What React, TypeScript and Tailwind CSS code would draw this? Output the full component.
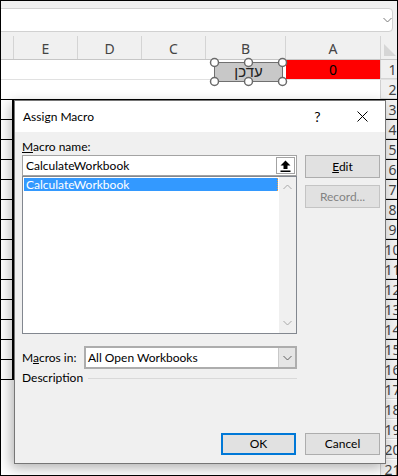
import React from 'react';

const cols = [
  { cls: 'w-[13px]', label: '' },
  { cls: 'w-[64px]', label: 'E' },
  { cls: 'w-[64px]', label: 'D' },
  { cls: 'w-[64px]', label: 'C' },
  { cls: 'w-[80px]', label: 'B' },
  { cls: 'w-[95px]', label: 'A' },
];

function Chevron({ up = false, color = '#606060' }: { up?: boolean; color?: string }) {
  return (
    <svg width="9" height="6" viewBox="0 0 9 6">
      <path d={up ? 'M0.5 5 L4.5 1 L8.5 5' : 'M0.5 1 L4.5 5 L8.5 1'} fill="none" stroke={color} strokeWidth="1" />
    </svg>
  );
}

export default function App() {
  const rows = Array.from({ length: 21 }, (_, i) => i + 1);
  return (
    <div className="relative w-[398px] h-[476px] border border-black overflow-hidden bg-white font-['Noto_Sans',sans-serif]">
      {/* top band */}
      <div className="h-[7px] bg-[#f0f0f0]" />
      {/* formula bar */}
      <div className="h-[24px] bg-[#f0f0f0] flex">
        <div className="-ml-[4px] w-[396px] h-full bg-white border border-[#d1d1d1] rounded-[4px] flex items-center justify-end">
          <Chevron color="#7a7a7a" />
        </div>
      </div>
      <div className="h-[4px] bg-[#f0f0f0]" />
      {/* column header */}
      <div className="h-[24px] flex bg-[#f0f0f0] border-b border-[#c6c6c6] w-[420px]">
        {cols.map((c, i) => (
          <div
            key={i}
            className={`${c.cls} shrink-0 h-full border-r border-[#d4d4d4] flex items-center justify-center pt-[2px] text-[14px] text-[#444]`}
          >
            {c.label}
          </div>
        ))}
        <div className="w-[23px] shrink-0 h-full relative">
          <svg className="absolute left-[3px] top-[8px]" width="12" height="12" viewBox="0 0 12 12">
            <path d="M0 0 L0 12 L12 12 Z" fill="#d6d6d6" />
          </svg>
        </div>
      </div>
      {/* rows */}
      {rows.map((r) => {
        const boxed = r >= 3 && r <= 16;
        const rowBorder = r === 1 ? 'border-[#e1e1e1]' : r >= 2 && r <= 16 ? 'border-black' : 'border-transparent';
        return (
          <div key={r} className={`h-[20px] flex w-[420px] border-b ${rowBorder}`}>
            {cols.map((c, i) => (
              <div
                key={i}
                className={`${c.cls} shrink-0 h-full ${
                  boxed ? (i === 0 ? 'border-r-2 border-black' : 'border-r border-black') : i === 5 ? 'border-r border-[#d0d0d0]' : ''
                } ${r === 1 && i === 5 ? 'bg-[#ff0000] flex items-center justify-center text-[14px] text-black' : ''}`}
              >
                {r === 1 && i === 5 ? '0' : ''}
              </div>
            ))}
            <div className="w-[23px] shrink-0 h-full bg-[#f0f0f0] flex items-center justify-center text-[14px] text-[#444] -mb-px border-b border-[#d4d4d4]">
              {r}
            </div>
          </div>
        );
      })}

      {/* shape button with handles */}
      <div className="absolute left-[208px] top-[56px] w-[80px] h-[31px]">
        <svg className="absolute inset-0" width="80" height="31" viewBox="0 0 80 31">
          <rect x="5.5" y="5.5" width="68" height="19" fill="#c8c8c8" stroke="#707070" strokeWidth="1" />
          {[5.5, 39.5, 73.5].map((x) =>
            [5.5, 24.5].map((y) => (
              <circle key={`${x}-${y}`} cx={x} cy={y} r="4" fill="#ffffff" stroke="#6a6a6a" strokeWidth="1.5" />
            ))
          )}
        </svg>
        <div className="absolute left-[5px] top-[6px] w-[69px] h-[19px] flex items-center justify-center text-[15px] text-[#222] font-['Liberation_Sans','DejaVu_Sans',sans-serif]" dir="rtl">
          עדכן
        </div>
      </div>

      {/* dialog */}
      <div className="absolute left-[13px] top-[99px] w-[372px] h-[364px] border border-[#767676] bg-[#f0f0f0] shadow-[-3px_4px_12px_rgba(0,0,0,0.3)] flex flex-col text-[12px] leading-[16px] text-black font-['Lato',sans-serif]">
        <div className="h-[31px] bg-white flex items-center shrink-0">
          <div className="pl-[8px]">Assign Macro</div>
          <div className="ml-auto flex h-full">
            <div className="w-[43px] h-full flex items-center justify-center text-[14px]">?</div>
            <div className="w-[46px] h-full flex items-center justify-center">
              <svg width="11" height="11" viewBox="0 0 11 11">
                <path d="M0.5 0.5 L10.5 10.5 M10.5 0.5 L0.5 10.5" stroke="#000" strokeWidth="1" />
              </svg>
            </div>
          </div>
        </div>
        <div className="flex-1 flex flex-col pl-[7px] pr-[5px]">
          <div className="mt-[7px] h-[16px]">
            <span className="underline">M</span>acro name:
          </div>
          <div className="flex gap-[8px]">
            <div className="w-[275px] flex flex-col">
              <div className="h-[21px] bg-white border border-[#a3a3a3] flex items-center">
                <div className="flex-1 pl-[3px]">CalculateWorkbook</div>
                <div className="w-[19px] h-[17px] mr-[1px] bg-white border border-[#a3a3a3] flex items-center justify-center">
                  <svg width="11" height="12" viewBox="0 0 11 12">
                    <path d="M5.5 0.5 L10.5 5.5 L7.5 5.5 L7.5 9 L3.5 9 L3.5 5.5 L0.5 5.5 Z" fill="#000" />
                    <rect x="0.5" y="10.5" width="10" height="1.5" fill="#000" />
                  </svg>
                </div>
              </div>
              <div className="h-[158px] bg-white border border-[#82878f] flex">
                <div className="flex-1 p-[1px]">
                  <div className="h-[13px] leading-[13px] bg-[#3399ff] text-white pl-[2px] border-r border-dotted border-[#e0a050]">
                    CalculateWorkbook
                  </div>
                </div>
                <div className="w-[17px] bg-[#f0f0f0] flex flex-col items-center justify-between py-[7px]">
                  <Chevron up color="#a8a8a8" />
                  <Chevron color="#a8a8a8" />
                </div>
              </div>
            </div>
            <div className="w-[75px] flex flex-col gap-[7px]">
              <div className="h-[23px] bg-[#e1e1e1] border border-[#adadad] flex items-center justify-center">
                <span>
                  <span className="underline">E</span>dit
                </span>
              </div>
              <div className="h-[23px] bg-[#e1e1e1] border border-[#c4c4c4] flex items-center justify-center text-[#838383]">
                Record...
              </div>
            </div>
          </div>
          <div className="mt-[12px] flex items-center w-[275px]">
            <div className="w-[62px]">
              M<span className="underline">a</span>cros in:
            </div>
            <div className="w-[213px] h-[23px] bg-white border-2 border-[#adadad] flex items-center">
              <div className="flex-1 pl-[2px]">All Open Workbooks</div>
              <div className="w-[17px] h-full bg-[#e5e5e5] border-l border-[#c8c8c8] flex items-center justify-center">
                <Chevron color="#606060" />
              </div>
            </div>
          </div>
          <div className="mt-[1px] h-[16px] flex items-center w-[275px]">
            <div>Description</div>
            <div className="flex-1 ml-[5px] h-px bg-[#d9d9d9]" />
          </div>
          <div className="mt-auto mb-[8px] flex justify-end gap-[9px]">
            <div className="w-[75px] h-[22px] bg-[#e1e1e1] border-2 border-[#0078d7] flex items-center justify-center">OK</div>
            <div className="w-[75px] h-[22px] bg-[#e1e1e1] border border-[#adadad] flex items-center justify-center">Cancel</div>
          </div>
        </div>
      </div>
    </div>
  );
}
